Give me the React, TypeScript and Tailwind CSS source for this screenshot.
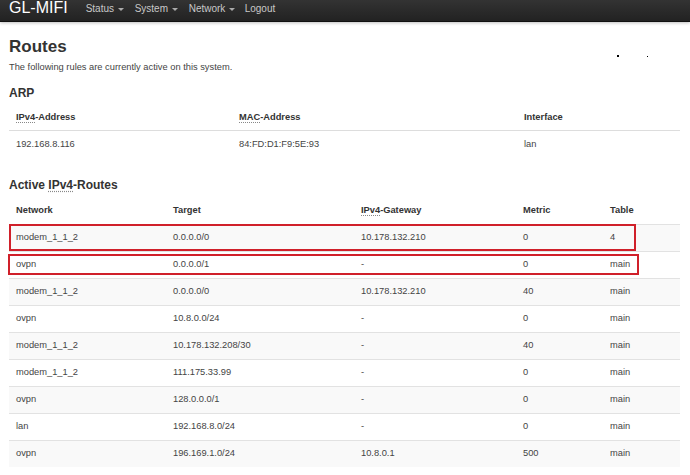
import React from "react";

const routes = [
  ["modem_1_1_2", "0.0.0.0/0", "10.178.132.210", "0", "4"],
  ["ovpn", "0.0.0.0/1", "-", "0", "main"],
  ["modem_1_1_2", "0.0.0.0/0", "10.178.132.210", "40", "main"],
  ["ovpn", "10.8.0.0/24", "-", "0", "main"],
  ["modem_1_1_2", "10.178.132.208/30", "-", "40", "main"],
  ["modem_1_1_2", "111.175.33.99", "-", "0", "main"],
  ["ovpn", "128.0.0.0/1", "-", "0", "main"],
  ["lan", "192.168.8.0/24", "-", "0", "main"],
  ["ovpn", "196.169.1.0/24", "10.8.0.1", "500", "main"],
];

function Abbr({ children }: { children: React.ReactNode }) {
  return (
    <span className="underline decoration-dotted decoration-[#888] underline-offset-2">
      {children}
    </span>
  );
}

function Caret() {
  return (
    <span className="ml-[4px] inline-block h-0 w-0 border-x-[3px] border-t-[3px] border-x-transparent border-t-[#aaa] align-middle" />
  );
}

export default function App() {
  return (
    <div
      className="relative h-[475px] w-[690px] overflow-hidden bg-white text-[#444]"
      style={{ fontFamily: '"Liberation Sans", Arial, sans-serif' }}
    >
      {/* Navbar */}
      <div className="flex h-[22px] items-start border-b border-[#111] bg-gradient-to-b from-[#333] to-[#222] shadow-[0_1px_3px_rgba(0,0,0,0.25)]">
        <div className="ml-[9px] mt-[-2px] text-[16px] leading-[19px] text-white">GL-MIFI</div>
        <div className="ml-[18px] mt-[1px] flex text-[10px] leading-[16px] text-[#c8c8c8]">
          <span className="w-[49px]">Status<Caret /></span>
          <span className="w-[54px]">System<Caret /></span>
          <span className="w-[56px]">Network<Caret /></span>
          <span>Logout</span>
        </div>
      </div>

      <div className="px-[9px]">
        <h1 className="mt-[15px] text-[17px] font-bold leading-[20px] text-[#333]">Routes</h1>
        <p className="mt-[4px] text-[9.3px] leading-[12px] text-[#444]">
          The following rules are currently active on this system.
        </p>

        <h2 className="mt-[13px] text-[12px] font-bold leading-[14px] text-[#333]">ARP</h2>
        <div className="mt-[5px] w-[671px] text-[9.3px]">
          <div className="grid h-[26px] grid-cols-[223px_285px_163px] items-center border-b border-[#ddd] font-bold text-[#333]">
            <div className="px-[7px]"><Abbr>IPv4</Abbr>-Address</div>
            <div className="px-[7px]"><Abbr>MAC</Abbr>-Address</div>
            <div className="px-[7px]">Interface</div>
          </div>
          <div className="grid h-[27px] grid-cols-[223px_285px_163px] items-center text-[#444]">
            <div className="px-[7px]">192.168.8.116</div>
            <div className="px-[7px]">84:FD:D1:F9:5E:93</div>
            <div className="px-[7px]">lan</div>
          </div>
        </div>

        <h2 className="mt-[20px] text-[12px] font-bold leading-[14px] text-[#333]">
          Active <Abbr>IPv4</Abbr>-Routes
        </h2>
        <div className="mt-[5px] w-[671px] text-[9.3px]">
          <div className="grid h-[27px] grid-cols-[157px_188px_162px_87px_77px] items-center font-bold text-[#333]">
            <div className="px-[7px]">Network</div>
            <div className="px-[7px]">Target</div>
            <div className="px-[7px]"><Abbr>IPv4</Abbr>-Gateway</div>
            <div className="px-[7px]">Metric</div>
            <div className="px-[7px]">Table</div>
          </div>
          {routes.map((r, i) => (
            <div
              key={i}
              className={
                "grid h-[27px] grid-cols-[157px_188px_162px_87px_77px] items-center border-t border-[#e2e2e2] text-[#444] " +
                (i % 2 === 0 ? "bg-[#f9f9f9]" : "bg-white")
              }
            >
              {r.map((c, j) => (
                <div key={j} className="px-[7px]">{c}</div>
              ))}
            </div>
          ))}
        </div>
      </div>

      {/* red highlight boxes */}
      <div className="absolute left-[9px] top-[224px] h-[27px] w-[627px] border-2 border-[#d0202a]" />
      <div className="absolute left-[8px] top-[254px] h-[21px] w-[631px] border-2 border-[#d0202a]" />

      {/* tiny artifacts */}
      <div className="absolute left-[617px] top-[55px] h-[2px] w-[2px] bg-black" />
      <div className="absolute left-[647px] top-[56px] h-[1px] w-[1px] bg-black" />
    </div>
  );
}
